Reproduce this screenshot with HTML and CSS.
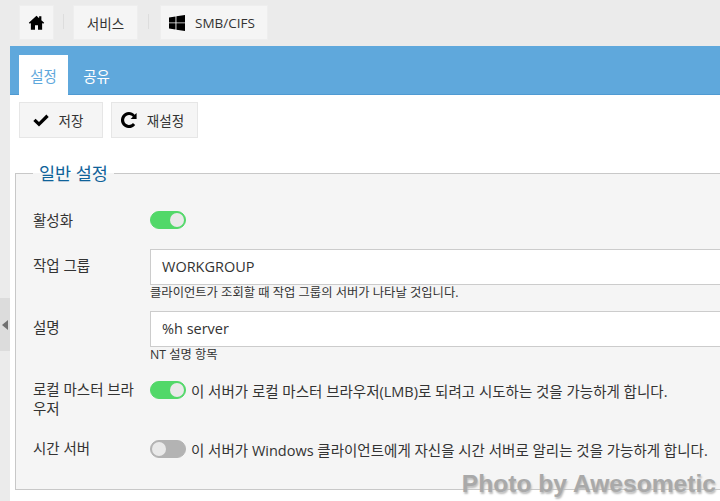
FILE: index.html
```html
<!DOCTYPE html>
<html lang="ko">
<head>
<meta charset="utf-8">
<title>SMB/CIFS</title>
<link rel="stylesheet" href="styles.css">
</head>
<body>
<div class="app">
  <aside class="rail">
    <div class="rail-handle"><span class="rail-arrow"></span></div>
  </aside>
  <div class="main">
    <nav class="crumbs">
      <a class="crumb crumb-home">
        <svg class="ico" width="17" height="15" viewBox="0 0 18 16"><path d="M9 .8 0.8 8.2l1.1 1.1L3 8.4V15.6h4.4v-4.6h3.2v4.6H15V8.4l1.1.9 1.1-1.1-3-2.7V1.4h-2.4v2.1z" fill="#000"/></svg>
      </a>
      <span class="sep"></span>
      <a class="crumb crumb-text">서비스</a>
      <span class="sep sep-wide"></span>
      <a class="crumb crumb-smb">
        <svg class="ico" width="16" height="16" viewBox="0 0 16 16"><path d="M0 2.4 6.5 1.4V7.4H0zM7.4 1.3 16 0V7.4H7.4zM0 8.3H6.5V14.4L0 13.5zM7.4 8.3H16V16L7.4 14.7z" fill="#000"/></svg>
        <span>SMB/CIFS</span>
      </a>
    </nav>
    <div class="panel">
      <div class="tabs">
        <a class="tab tab-active">설정</a>
        <a class="tab">공유</a>
      </div>
      <div class="actions">
        <button class="btn btn-save">
          <svg class="ico" width="16" height="13" viewBox="0 0 16 13"><path d="M0.3 7 2.6 4.7 6 8 13.4 .6 15.7 2.9 6 12.6z" fill="#000"/></svg>
          <span>저장</span>
        </button>
        <button class="btn btn-reset">
          <svg class="ico" width="16" height="16" viewBox="0 0 16 16"><path d="M15.6 1v6H9.6l2.3-2.3A4.7 4.7 0 0 0 8 3.1 4.9 4.9 0 1 0 11.9 11l2.3 2A8 8 0 1 1 8 0c2.2 0 4.2.9 5.6 2.8z" fill="#000"/></svg>
          <span>재설정</span>
        </button>
      </div>
      <fieldset class="group">
        <legend class="group-title">일반 설정</legend>
        <div class="row row-switch">
          <div class="label">활성화</div>
          <div class="field"><span class="switch on"><i></i></span></div>
        </div>
        <div class="row row-input">
          <div class="label label-input">작업 그룹</div>
          <div class="field field-col">
            <div class="input">WORKGROUP</div>
            <div class="hint">클라이언트가 조회할 때 작업 그룹의 서버가 나타날 것입니다.</div>
          </div>
        </div>
        <div class="row row-input">
          <div class="label label-input">설명</div>
          <div class="field field-col">
            <div class="input">%h server</div>
            <div class="hint">NT 설명 항목</div>
          </div>
        </div>
        <div class="row row-master">
          <div class="label">로컬 마스터 브라우저</div>
          <div class="field"><span class="switch on"><i></i></span><span class="desc">이 서버가 로컬 마스터 브라우저(LMB)로 되려고 시도하는 것을 가능하게 합니다.</span></div>
        </div>
        <div class="row row-time">
          <div class="label">시간 서버</div>
          <div class="field"><span class="switch"><i></i></span><span class="desc">이 서버가 Windows 클라이언트에게 자신을 시간 서버로 알리는 것을 가능하게 합니다.</span></div>
        </div>
      </fieldset>
    </div>
  </div>
</div>
<div class="watermark">Photo by Awesometic</div>
</body>
</html>
```

FILE: styles.css
```css
* { box-sizing: border-box; }
html, body { margin: 0; padding: 0; height: 501px; overflow: hidden; }
body {
  background: #fff;
  font-family: "Open Sans", "Noto Sans CJK KR", sans-serif;
  font-size: 14.5px;
  color: #333;
  position: relative;
}
.app { display: flex; width: 720px; height: 501px; background: #ebebeb; }
.rail { width: 10px; flex: none; display: flex; align-items: flex-start; padding-top: 298px; }
.rail-handle { width: 10px; height: 53px; background: #dcdcdc; display: flex; align-items: center; padding-left: 2px; }
.rail-arrow { width: 0; height: 0; border-style: solid; border-width: 5px 6px 5px 0; border-color: transparent #707070 transparent transparent; }
.main { flex: 1; min-width: 0; display: flex; flex-direction: column; }
.crumbs { height: 46px; flex: none; display: flex; align-items: flex-start; padding: 5px 0 0 9px; }
.crumb { height: 35px; background: #f5f5f5; border: 1px solid #eee; display: flex; align-items: center; justify-content: center; color: #333; font-size: 13.5px; }
.crumb-home { width: 35px; }
.crumb-text { width: 65px; }
.crumb-smb { width: 108px; gap: 10px; padding-right: 4px; }
.sep { width: 1px; height: 15px; background: #ddd; margin: 9px 9px 0 9px; flex: none; }
.sep-wide { margin: 9px 11px 0 10px; }
.ico { display: block; flex: none; }
.panel { flex: 1; background: #fff; position: relative; }
.tabs { height: 49px; background: #5fa8dc; border-bottom: 1px solid #4f9ad2; display: flex; align-items: flex-end; padding-left: 9px; }
.tab { width: 49px; height: 40px; margin-bottom: -1px; display: flex; align-items: center; justify-content: center; color: #fff; margin-right: 4px; }
.tab-active { background: #fff; color: #5fa8dc; }
.actions { display: flex; gap: 8px; padding: 7px 0 0 9px; height: 53px; }
.btn { height: 36px; background: #f5f5f5; border: 1px solid #e6e6e6; display: flex; align-items: center; justify-content: center; font: inherit; font-size: 13.5px; color: #333; padding: 0; gap: 10px; }
.btn-save { width: 84px; padding-right: 6px; }
.btn-reset { width: 87px; padding-right: 4px; }
.group {
  margin: 14px 0 0 5px;
  width: 720px;
  height: 328px;
  padding: 0 0 0 17px;
  background: #f5f5f5;
  border: 1px solid #c8c8c8;
  border-right: 0;
  min-inline-size: 0;
}
.group-title { font-size: 17.5px; color: #0f6299; padding: 0 6px; line-height: 22px; height: 22px; }
.row { display: flex; width: 700px; }
.label { width: 117px; flex: none; line-height: 19px; padding-right: 6px; }
.field { flex: 1; min-width: 0; display: flex; align-items: center; }
.field-col { flex-direction: column; align-items: stretch; }
.row-switch { margin-top: 27px; height: 18px; align-items: center; }
.input { height: 36px; background: #fff; border: 1px solid #ccc; padding-left: 11px; line-height: 34px; width: 600px; }
.hint { font-size: 12.3px; line-height: 15px; color: #333; }
.row-input { height: 51px; margin-bottom: 11px; }
.row-switch + .row-input { margin-top: 20px; }
.label-input { padding-top: 7px; }
.row-master { height: 40px; margin-top: 18px; align-items: flex-start; }
.row-master .field { height: 18px; margin-top: 1px; }
.row-time { height: 20px; margin-top: 19px; }
.switch { width: 36px; height: 18px; border-radius: 9px; background: #b3b3b3; border: 1px solid #b3b3b3; position: relative; flex: none; }
.switch i { position: absolute; left: 1px; top: 1px; width: 14px; height: 14px; border-radius: 50%; background: #e9e9e9; }
.switch.on { background: #52d869; border-color: #52d869; }
.switch.on i { left: auto; right: 1px; }
.desc { margin-left: 5px; white-space: nowrap; }
.watermark {
  position: absolute;
  right: 4px;
  bottom: 3px;
  font-family: "Liberation Sans", sans-serif;
  font-weight: 700;
  font-size: 24.6px;
  line-height: 28px;
  color: #a9a9a9;
  text-shadow: 1px 2px 2px #bbb;
  white-space: nowrap;
}
```
